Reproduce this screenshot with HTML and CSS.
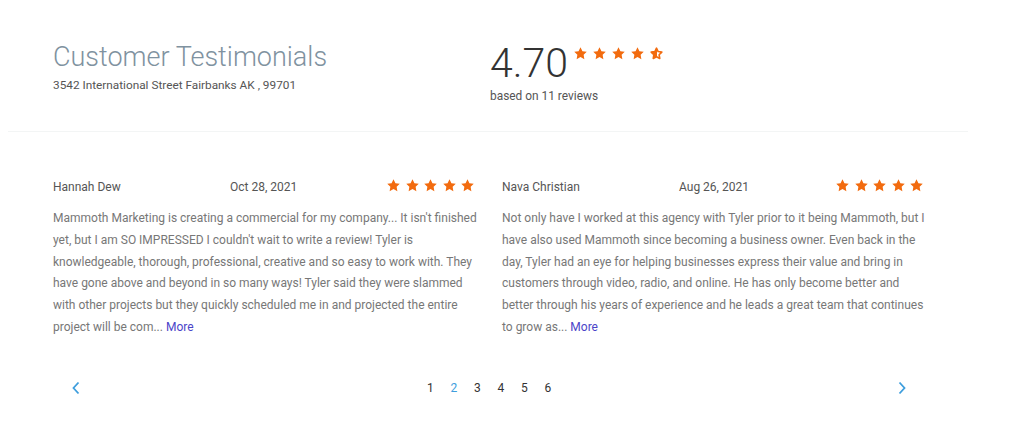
FILE: index.html
```html
<!DOCTYPE html>
<html>
<head>
<meta charset="utf-8">
<link rel="stylesheet" href="styles.css">
</head>
<body>
<div class="page">
  <header class="head">
    <div class="head-left">
      <h1 class="title">Customer Testimonials</h1>
      <div class="address">3542 International Street Fairbanks AK , 99701</div>
    </div>
    <div class="head-right">
      <div class="score-row">
        <span class="score">4.70</span>
        <span class="stars stars-sm">
          <svg viewBox="0 0 24 24"><polygon points="12,2 15.09,8.26 22,9.27 17,14.14 18.18,21.02 12,17.77 5.82,21.02 7,14.14 2,9.27 8.91,8.26"/></svg>
          <svg viewBox="0 0 24 24"><polygon points="12,2 15.09,8.26 22,9.27 17,14.14 18.18,21.02 12,17.77 5.82,21.02 7,14.14 2,9.27 8.91,8.26"/></svg>
          <svg viewBox="0 0 24 24"><polygon points="12,2 15.09,8.26 22,9.27 17,14.14 18.18,21.02 12,17.77 5.82,21.02 7,14.14 2,9.27 8.91,8.26"/></svg>
          <svg viewBox="0 0 24 24"><polygon points="12,2 15.09,8.26 22,9.27 17,14.14 18.18,21.02 12,17.77 5.82,21.02 7,14.14 2,9.27 8.91,8.26"/></svg>
          <svg viewBox="0 0 24 24" class="half">
            <defs><linearGradient id="hg"><stop offset="50%" stop-color="#f26b0f"/><stop offset="50%" stop-color="#fff"/></linearGradient></defs>
            <polygon fill="url(#hg)" stroke="#f26b0f" stroke-width="2.6" stroke-linejoin="round" points="12,3.5 14.6,8.9 20.5,9.8 16.2,14 17.2,19.9 12,17.1 6.8,19.9 7.8,14 3.5,9.8 9.4,8.9"/>
          </svg>
        </span>
      </div>
      <div class="based">based on 11 reviews</div>
    </div>
  </header>
  <hr class="divider">
  <section class="reviews">
    <article class="review">
      <div class="review-head">
        <span class="name">Hannah Dew</span>
        <span class="date">Oct 28, 2021</span>
        <span class="stars stars-md">
          <svg viewBox="0 0 24 24"><polygon points="12,2 15.09,8.26 22,9.27 17,14.14 18.18,21.02 12,17.77 5.82,21.02 7,14.14 2,9.27 8.91,8.26"/></svg>
          <svg viewBox="0 0 24 24"><polygon points="12,2 15.09,8.26 22,9.27 17,14.14 18.18,21.02 12,17.77 5.82,21.02 7,14.14 2,9.27 8.91,8.26"/></svg>
          <svg viewBox="0 0 24 24"><polygon points="12,2 15.09,8.26 22,9.27 17,14.14 18.18,21.02 12,17.77 5.82,21.02 7,14.14 2,9.27 8.91,8.26"/></svg>
          <svg viewBox="0 0 24 24"><polygon points="12,2 15.09,8.26 22,9.27 17,14.14 18.18,21.02 12,17.77 5.82,21.02 7,14.14 2,9.27 8.91,8.26"/></svg>
          <svg viewBox="0 0 24 24"><polygon points="12,2 15.09,8.26 22,9.27 17,14.14 18.18,21.02 12,17.77 5.82,21.02 7,14.14 2,9.27 8.91,8.26"/></svg>
        </span>
      </div>
      <p class="text">Mammoth Marketing is creating a commercial for my company... It isn't finished yet, but I am SO IMPRESSED I couldn't wait to write a review! Tyler is knowledgeable, thorough, professional, creative and so easy to work with. They have gone above and beyond in so many ways! Tyler said they were slammed with other projects but they quickly scheduled me in and projected the entire project will be com...&nbsp;<a class="more" href="#">More</a></p>
    </article>
    <article class="review">
      <div class="review-head">
        <span class="name">Nava Christian</span>
        <span class="date">Aug 26, 2021</span>
        <span class="stars stars-md">
          <svg viewBox="0 0 24 24"><polygon points="12,2 15.09,8.26 22,9.27 17,14.14 18.18,21.02 12,17.77 5.82,21.02 7,14.14 2,9.27 8.91,8.26"/></svg>
          <svg viewBox="0 0 24 24"><polygon points="12,2 15.09,8.26 22,9.27 17,14.14 18.18,21.02 12,17.77 5.82,21.02 7,14.14 2,9.27 8.91,8.26"/></svg>
          <svg viewBox="0 0 24 24"><polygon points="12,2 15.09,8.26 22,9.27 17,14.14 18.18,21.02 12,17.77 5.82,21.02 7,14.14 2,9.27 8.91,8.26"/></svg>
          <svg viewBox="0 0 24 24"><polygon points="12,2 15.09,8.26 22,9.27 17,14.14 18.18,21.02 12,17.77 5.82,21.02 7,14.14 2,9.27 8.91,8.26"/></svg>
          <svg viewBox="0 0 24 24"><polygon points="12,2 15.09,8.26 22,9.27 17,14.14 18.18,21.02 12,17.77 5.82,21.02 7,14.14 2,9.27 8.91,8.26"/></svg>
        </span>
      </div>
      <p class="text">Not only have I worked at this agency with Tyler prior to it being Mammoth, but I have also used Mammoth since becoming a business owner. Even back in the day, Tyler had an eye for helping businesses express their value and bring in customers through video, radio, and online. He has only become better and better through his years of experience and he leads a great team that continues to grow as...&nbsp;<a class="more" href="#">More</a></p>
    </article>
  </section>
  <nav class="pager">
    <a class="arrow" href="#"><svg viewBox="0 0 10 14"><polyline points="7.5,1.5 2.5,7 7.5,12.5"/></svg></a>
    <div class="pages">
      <a href="#" class="pg">1</a>
      <a href="#" class="pg active">2</a>
      <a href="#" class="pg">3</a>
      <a href="#" class="pg">4</a>
      <a href="#" class="pg">5</a>
      <a href="#" class="pg">6</a>
    </div>
    <a class="arrow" href="#"><svg viewBox="0 0 10 14"><polyline points="2.5,1.5 7.5,7 2.5,12.5"/></svg></a>
  </nav>
</div>
</body>
</html>
```

FILE: styles.css
```css
* { box-sizing: border-box; }
body {
  margin: 0;
  background: #fff;
  font-family: Roboto, "Liberation Sans", Arial, sans-serif;
  color: #555;
}
.page {
  width: 968px;
  padding: 0 0 0 8px;
}
.head {
  display: flex;
  padding: 41px 0 0 45px;
  height: 131px;
}
.head-left { width: 437px; }
.title {
  margin: 0;
  font-size: 27px;
  font-weight: 300;
  line-height: 32px;
  color: #7f92a0;
}
.address {
  font-size: 11.8px;
  line-height: 14px;
  margin-top: 5px;
  color: #555;
}
.score-row {
  display: flex;
  align-items: flex-start;
}
.score {
  font-size: 41px;
  font-weight: 300;
  line-height: 46px;
  color: #333;
  margin-top: -1px;
}
.stars { display: flex; }
.stars svg { fill: #f26b0f; display: block; }
.stars-sm { gap: 4px; margin-left: 5px; margin-top: 5px; }
.stars-sm svg { width: 15px; height: 15px; }
.based {
  font-size: 11.9px;
  line-height: 14px;
  color: #555;
  margin-top: 3px;
}
.divider {
  margin: 0;
  border: 0;
  border-top: 1px solid #f3f5f5;
  width: 960px;
}
.reviews {
  display: flex;
  gap: 19px;
  padding: 46px 0 0 45px;
}
.review { width: 430px; }
.review-head {
  display: grid;
  grid-template-columns: 177px 1fr auto;
  align-items: center;
  padding-right: 8px;
  height: 18px;
}
.name, .date {
  font-size: 12px;
  color: #555;
}
.stars-md { gap: 3.5px; margin-top: -3px; }
.stars-md svg { width: 15px; height: 15px; }
.text {
  margin: 12px 0 0;
  font-size: 12px;
  line-height: 21.8px;
  color: #777;
}
.more {
  color: #4b45c9;
  text-decoration: none;
}
.pager {
  display: flex;
  align-items: center;
  justify-content: space-between;
  width: 872px;
  margin: 42px 0 0 45px;
  padding: 0 18px;
}
.arrow { display: block; width: 10px; height: 14px; }
.arrow svg {
  display: block;
  width: 10px;
  height: 14px;
  fill: none;
  stroke: #3e9edd;
  stroke-width: 1.8;
}
.pages { display: flex; gap: 13px; }
.pg {
  font-size: 12px;
  color: #333;
  text-decoration: none;
  width: 10.5px;
  text-align: center;
}
.pg.active { color: #3e9edd; }
```
